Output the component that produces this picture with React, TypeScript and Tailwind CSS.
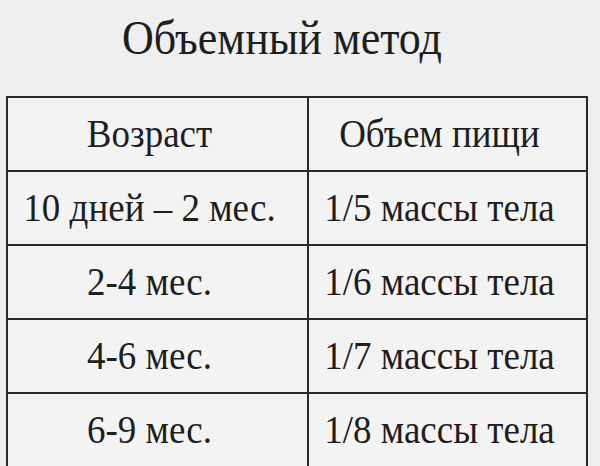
const rows: [string, string][] = [
  ["10 дней – 2 мес.", "1/5 массы тела"],
  ["2-4 мес.", "1/6 массы тела"],
  ["4-6 мес.", "1/7 массы тела"],
  ["6-9 мес.", "1/8 массы тела"],
];

function Cell({ children, last }: { children: React.ReactNode; last?: boolean }) {
  return (
    <div
      className={`h-[74px] flex items-center justify-center border-b-2 border-[#2a2a2a] pr-[16px] ${
        last ? "" : "border-r-2"
      }`}
    >
      <span className="scale-y-[1.1] inline-block">{children}</span>
    </div>
  );
}

export default function App() {
  return (
    <div
      className="w-[600px] h-[466px] overflow-hidden bg-[#efefef] text-[#1e1e1e]"
      style={{ fontFamily: '"Liberation Serif", "Times New Roman", serif' }}
    >
      <div className="h-[96px] flex items-start justify-center pr-[36px] pt-[13px]">
        <h1 className="text-[44px] leading-[52px] scale-y-[1.08]">Объемный метод</h1>
      </div>
      <div className="ml-[6px] w-[582px] border-t-2 border-l-2 border-r-2 border-[#2a2a2a] bg-[#f3f3f3] grid grid-cols-[301px_1fr] text-[37px]">
        <Cell>Возраст</Cell>
        <Cell last>Объем пищи</Cell>
        {rows.map(([age, vol]) => (
          <>
            <Cell key={age + "a"}>{age}</Cell>
            <Cell key={age + "b"} last>
              {vol}
            </Cell>
          </>
        ))}
      </div>
    </div>
  );
}
